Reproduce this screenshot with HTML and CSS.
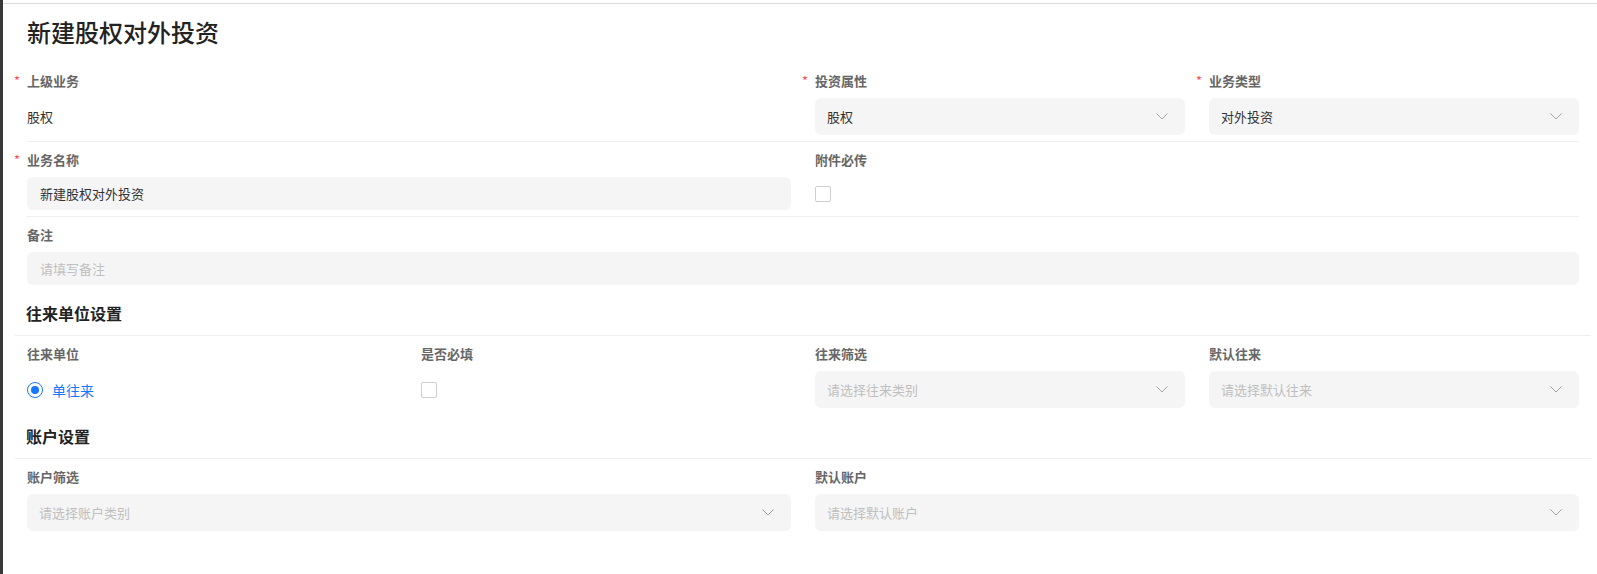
FILE: index.html
```html
<!DOCTYPE html>
<html lang="zh-CN">
<head>
    <meta charset="UTF-8">
    <title>新建股权对外投资</title>
    <link rel="stylesheet" href="styles.css">
</head>
<body>
    <div class="page">
        <h1 class="page-title">新建股权对外投资</h1>

        <div class="form-row divided">
            <div class="item span-2">
                <div class="label req">上级业务</div>
                <div class="control plain">股权</div>
            </div>
            <div class="item">
                <div class="label req">投资属性</div>
                <div class="control select">
                    <span>股权</span>
                    <svg class="chevron" width="12" height="7" viewBox="0 0 12 7"><polyline points="0.5,0.5 6,6 11.5,0.5" fill="none" stroke="#a3a3a3" stroke-width="1"/></svg>
                </div>
            </div>
            <div class="item">
                <div class="label req">业务类型</div>
                <div class="control select">
                    <span>对外投资</span>
                    <svg class="chevron" width="12" height="7" viewBox="0 0 12 7"><polyline points="0.5,0.5 6,6 11.5,0.5" fill="none" stroke="#a3a3a3" stroke-width="1"/></svg>
                </div>
            </div>
        </div>

        <div class="form-row divided">
            <div class="item span-2">
                <div class="label req">业务名称</div>
                <div class="control input">新建股权对外投资</div>
            </div>
            <div class="item">
                <div class="label">附件必传</div>
                <div class="control input-h check-wrap"><span class="checkbox"></span></div>
            </div>
        </div>

        <div class="form-row">
            <div class="item span-4">
                <div class="label">备注</div>
                <div class="control input placeholder">请填写备注</div>
            </div>
        </div>

        <div class="section-head">往来单位设置</div>

        <div class="form-row">
            <div class="item">
                <div class="label">往来单位</div>
                <div class="control check-wrap">
                    <span class="radio"></span>
                    <span class="radio-text">单往来</span>
                </div>
            </div>
            <div class="item">
                <div class="label">是否必填</div>
                <div class="control check-wrap"><span class="checkbox"></span></div>
            </div>
            <div class="item">
                <div class="label">往来筛选</div>
                <div class="control select placeholder">
                    <span>请选择往来类别</span>
                    <svg class="chevron" width="12" height="7" viewBox="0 0 12 7"><polyline points="0.5,0.5 6,6 11.5,0.5" fill="none" stroke="#a3a3a3" stroke-width="1"/></svg>
                </div>
            </div>
            <div class="item">
                <div class="label">默认往来</div>
                <div class="control select placeholder">
                    <span>请选择默认往来</span>
                    <svg class="chevron" width="12" height="7" viewBox="0 0 12 7"><polyline points="0.5,0.5 6,6 11.5,0.5" fill="none" stroke="#a3a3a3" stroke-width="1"/></svg>
                </div>
            </div>
        </div>

        <div class="section-head">账户设置</div>

        <div class="form-row">
            <div class="item span-2">
                <div class="label">账户筛选</div>
                <div class="control select placeholder">
                    <span>请选择账户类别</span>
                    <svg class="chevron" width="12" height="7" viewBox="0 0 12 7"><polyline points="0.5,0.5 6,6 11.5,0.5" fill="none" stroke="#a3a3a3" stroke-width="1"/></svg>
                </div>
            </div>
            <div class="item span-2">
                <div class="label">默认账户</div>
                <div class="control select placeholder">
                    <span>请选择默认账户</span>
                    <svg class="chevron" width="12" height="7" viewBox="0 0 12 7"><polyline points="0.5,0.5 6,6 11.5,0.5" fill="none" stroke="#a3a3a3" stroke-width="1"/></svg>
                </div>
            </div>
        </div>
    </div>
</body>
</html>
```

FILE: styles.css
```css
* {
    box-sizing: border-box;
}

html, body {
    height: 100%;
}

body {
    margin: 0;
    background: #fff;
    border-left: 3px solid #383838;
    font-family: "Noto Sans CJK SC", "Noto Sans", sans-serif;
    color: #333;
}

.page {
    margin-top: 3px;
    border-top: 1px solid #dcdcdc;
    padding: 12px 18px 0 24px;
}

.page-title {
    margin: 0 0 15px;
    font-size: 24px;
    line-height: 32px;
    font-weight: 500;
    color: #222;
}

/* form grid */
.form-row {
    display: grid;
    grid-template-columns: repeat(4, 1fr);
    column-gap: 24px;
    padding: 8px 0;
}

.form-row.divided {
    padding-bottom: 6px;
    border-bottom: 1px solid #efefef;
}

.span-2 {
    grid-column: span 2;
}

.span-4 {
    grid-column: span 4;
}

.label {
    font-size: 13px;
    line-height: 20px;
    font-weight: 700;
    color: #666;
    margin-bottom: 7px;
}

.label.req::before {
    content: "*";
    display: inline-block;
    width: 13px;
    margin-left: -13px;
    color: #ff4d4f;
    font-weight: 400;
}

.control {
    height: 37px;
    display: flex;
    align-items: center;
    font-size: 13px;
}

.control.plain {
    color: #333;
}

.control.select,
.control.input {
    background: #f5f5f5;
    border-radius: 6px;
    padding: 0 17px 0 12px;
    justify-content: space-between;
}

.control.input,
.control.input-h {
    height: 33px;
}

.control.input {
    padding-left: 13px;
}

.placeholder {
    color: #bfbfbf;
}

.chevron {
    flex: none;
}

.checkbox {
    width: 16px;
    height: 16px;
    border: 1px solid #cfcfcf;
    border-radius: 2px;
    background: #fff;
}

.radio {
    width: 16px;
    height: 16px;
    border: 1px solid #1677ff;
    border-radius: 50%;
    display: flex;
    align-items: center;
    justify-content: center;
}

.radio::after {
    content: "";
    width: 8px;
    height: 8px;
    border-radius: 50%;
    background: #1677ff;
}

.radio-text {
    margin-left: 9px;
    font-size: 14px;
    color: #1677ff;
}

/* section headers */
.section-head {
    margin: 8px -12px 0 -12px;
    padding: 0 12px 10px 11px;
    border-bottom: 1px solid #efefef;
    font-size: 16px;
    line-height: 24px;
    font-weight: 700;
    color: #222;
}
```
